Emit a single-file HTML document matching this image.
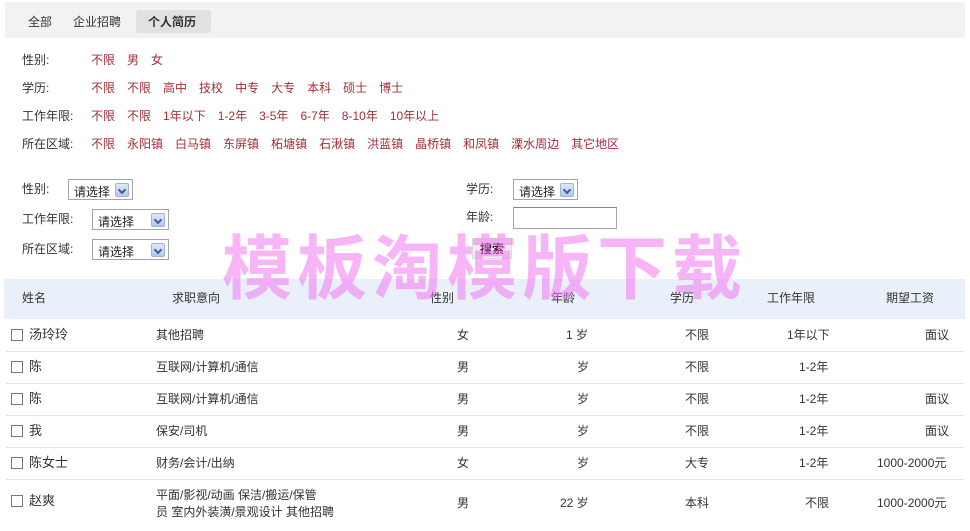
<!DOCTYPE html>
<html><head><meta charset="utf-8"><style>
*{margin:0;padding:0;box-sizing:border-box}
body{width:970px;height:531px;background:#fff;font-family:"Liberation Sans","Noto Sans CJK SC",sans-serif;font-size:12px;color:#333;position:relative;overflow:hidden}
.a{position:absolute;white-space:nowrap;line-height:14px}
.r{color:#a0303a}
.r b{font-weight:normal;display:inline-block;margin-right:12px}
.sel{position:absolute;border:1px solid #a5a5a5;background:#fff;height:21px}
.sel span{position:absolute;left:5px;top:3px;font-size:12px;color:#222}
.sel i{position:absolute;right:3px;top:3px;width:14px;height:14px;background:linear-gradient(#dfe8f6,#b7c8e8);border:1px solid #9fb2d8;border-radius:2px}
.sel i:after{content:"";position:absolute;left:3px;top:3px;width:4px;height:4px;border-right:2px solid #3a5ba0;border-bottom:2px solid #3a5ba0;transform:rotate(45deg)}
.line{position:absolute;left:6px;width:958px;height:1px;background:#e4e4e4}
.cb{position:absolute;width:12px;height:12px;border:1px solid #777;background:#fff}
</style></head><body>
<div style="position:absolute;left:5px;top:2px;width:960px;height:36px;background:#f2f2f2"></div>
<div style="position:absolute;left:136px;top:10px;width:75px;height:23px;background:#e1e1e1;border-radius:3px"></div>
<div class="a" style="left:28px;top:15px">全部</div>
<div class="a" style="left:73px;top:15px">企业招聘</div>
<div class="a" style="left:148px;top:15px;font-weight:bold">个人简历</div>

<div class="a" style="left:22px;top:53px">性别:</div>
<div class="a r" style="left:91px;top:53px"><b>不限</b><b>男</b><b>女</b></div>
<div class="a" style="left:22px;top:81px">学历:</div>
<div class="a r" style="left:91px;top:81px"><b>不限</b><b>不限</b><b>高中</b><b>技校</b><b>中专</b><b>大专</b><b>本科</b><b>硕士</b><b>博士</b></div>
<div class="a" style="left:22px;top:109px">工作年限:</div>
<div class="a r" style="left:91px;top:109px"><b>不限</b><b>不限</b><b>1年以下</b><b>1-2年</b><b>3-5年</b><b>6-7年</b><b>8-10年</b><b>10年以上</b></div>
<div class="a" style="left:22px;top:137px">所在区域:</div>
<div class="a r" style="left:91px;top:137px"><b>不限</b><b>永阳镇</b><b>白马镇</b><b>东屏镇</b><b>柘塘镇</b><b>石湫镇</b><b>洪蓝镇</b><b>晶桥镇</b><b>和凤镇</b><b>溧水周边</b><b>其它地区</b></div>

<div class="a" style="left:22px;top:182px">性别:</div>
<div class="sel" style="left:68px;top:179px;width:65px"><span>请选择</span><i></i></div>
<div class="a" style="left:22px;top:212px">工作年限:</div>
<div class="sel" style="left:92px;top:209px;width:77px"><span>请选择</span><i></i></div>
<div class="a" style="left:22px;top:242px">所在区域:</div>
<div class="sel" style="left:92px;top:239px;width:77px"><span>请选择</span><i></i></div>
<div class="a" style="left:466px;top:182px">学历:</div>
<div class="sel" style="left:513px;top:179px;width:65px"><span>请选择</span><i></i></div>
<div class="a" style="left:466px;top:210px">年龄:</div>
<div style="position:absolute;left:513px;top:207px;width:104px;height:22px;border:1px solid #a5a5a5;border-top-color:#888"></div>
<div style="position:absolute;left:472px;top:238px;width:40px;height:21px;background:#eee;border:1px solid #ddd"></div>
<div class="a" style="left:480px;top:242px;font-weight:bold;color:#40103a">搜索</div>

<div style="position:absolute;left:4px;top:279px;width:961px;height:40px;background:#eaf0fa"></div>
<div class="a" style="left:22px;top:291px">姓名</div>
<div class="a" style="left:172px;top:291px">求职意向</div>
<div class="a" style="left:430px;top:291px">性别</div>
<div class="a" style="left:551px;top:291px">年龄</div>
<div class="a" style="left:670px;top:291px">学历</div>
<div class="a" style="left:767px;top:291px">工作年限</div>
<div class="a" style="left:886px;top:291px">期望工资</div>

<div class="line" style="top:351px"></div>
<div class="line" style="top:383px"></div>
<div class="line" style="top:415px"></div>
<div class="line" style="top:447px"></div>
<div class="line" style="top:479px"></div>

<div class="cb" style="left:11px;top:329px"></div><div class="a" style="left:29px;top:328px;font-size:13px">汤玲玲</div>
<div class="a" style="left:156px;top:328px">其他招聘</div><div class="a" style="left:457px;top:328px">女</div>
<div class="a" style="left:566px;top:328px">1 岁</div><div class="a" style="left:685px;top:328px">不限</div>
<div class="a" style="left:787px;top:328px">1年以下</div><div class="a" style="left:925px;top:328px">面议</div>

<div class="cb" style="left:11px;top:361px"></div><div class="a" style="left:29px;top:360px;font-size:13px">陈</div>
<div class="a" style="left:156px;top:360px">互联网/计算机/通信</div><div class="a" style="left:457px;top:360px">男</div>
<div class="a" style="left:577px;top:360px">岁</div><div class="a" style="left:685px;top:360px">不限</div>
<div class="a" style="left:799px;top:360px">1-2年</div>

<div class="cb" style="left:11px;top:393px"></div><div class="a" style="left:29px;top:392px;font-size:13px">陈</div>
<div class="a" style="left:156px;top:392px">互联网/计算机/通信</div><div class="a" style="left:457px;top:392px">男</div>
<div class="a" style="left:577px;top:392px">岁</div><div class="a" style="left:685px;top:392px">不限</div>
<div class="a" style="left:799px;top:392px">1-2年</div><div class="a" style="left:925px;top:392px">面议</div>

<div class="cb" style="left:11px;top:425px"></div><div class="a" style="left:29px;top:424px;font-size:13px">我</div>
<div class="a" style="left:156px;top:424px">保安/司机</div><div class="a" style="left:457px;top:424px">男</div>
<div class="a" style="left:577px;top:424px">岁</div><div class="a" style="left:685px;top:424px">不限</div>
<div class="a" style="left:799px;top:424px">1-2年</div><div class="a" style="left:925px;top:424px">面议</div>

<div class="cb" style="left:11px;top:457px"></div><div class="a" style="left:29px;top:456px;font-size:13px">陈女士</div>
<div class="a" style="left:156px;top:456px">财务/会计/出纳</div><div class="a" style="left:457px;top:456px">女</div>
<div class="a" style="left:577px;top:456px">岁</div><div class="a" style="left:685px;top:456px">大专</div>
<div class="a" style="left:799px;top:456px">1-2年</div><div class="a" style="left:877px;top:456px">1000-2000元</div>

<div class="cb" style="left:11px;top:495px"></div><div class="a" style="left:29px;top:494px;font-size:13px">赵爽</div>
<div class="a" style="left:156px;top:487px;line-height:17px">平面/影视/动画 保洁/搬运/保管<br>员 室内外装潢/景观设计 其他招聘</div>
<div class="a" style="left:457px;top:496px">男</div>
<div class="a" style="left:560px;top:496px">22 岁</div><div class="a" style="left:685px;top:496px">本科</div>
<div class="a" style="left:805px;top:496px">不限</div><div class="a" style="left:877px;top:496px">1000-2000元</div>

<div class="a" style="left:222px;top:222px;line-height:84px;font-size:70px;font-weight:bold;letter-spacing:5px;color:rgba(240,120,240,0.55);font-family:'Noto Sans CJK SC',sans-serif">模板淘模版下载</div>
</body></html>
